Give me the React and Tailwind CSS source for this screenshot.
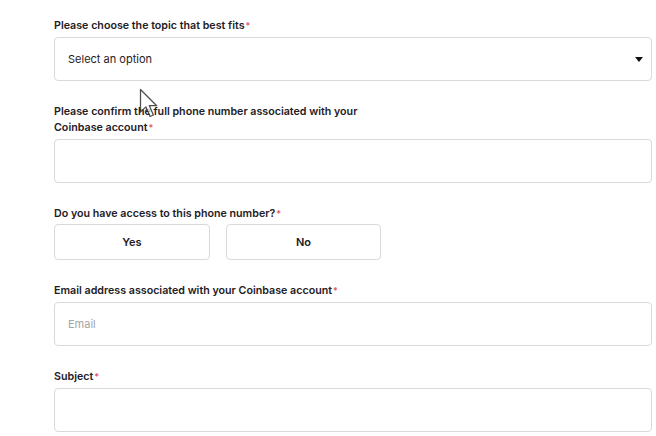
import React from "react";

const font = { fontFamily: "Inter, 'Liberation Sans', sans-serif" };

const Label = ({ children, className = "mb-[3px]" }) => (
  <div className={`text-[10.7px] leading-4 font-semibold text-[#1e2025] ${className}`}>
    {children}
    <span className="text-[#e3566a] text-[9px] align-top ml-[1px]">*</span>
  </div>
);

const Box = ({ children, className = "" }) => (
  <div
    className={`w-[598px] h-[44px] border border-[#d9d9de] rounded-[4px] bg-white flex items-center pl-[13px] pr-[8px] text-[11px] ${className}`}
  >
    {children}
  </div>
);

const Cursor = () => (
  <svg
    className="absolute left-[139px] top-[88px]"
    width="21"
    height="30"
    viewBox="0 0 14 20"
  >
    <path
      d="M1 1 L1 16 L4.6 12.6 L7.4 19 L9.6 18 L6.9 11.8 L11.8 11.8 Z"
      fill="rgba(255,255,255,0.7)"
      stroke="rgba(20,20,20,0.75)"
      strokeWidth="0.85"
      strokeLinejoin="round"
    />
  </svg>
);

export default function App() {
  return (
    <div className="relative w-[656px] h-[436px] bg-white overflow-hidden" style={font}>
      <div className="pl-[54px] pt-[18px] flex flex-col">
        <Label>Please choose the topic that best fits</Label>
        <Box className="justify-between text-[#1e2025]">
          <span>Select an option</span>
          <svg width="8" height="5" viewBox="0 0 8 5">
            <path d="M0 0 L8 0 L4 5 Z" fill="#111" />
          </svg>
        </Box>

        <div className="mt-[23px]">
          <Label>
            Please confirm the full phone number associated with your
            <br />
            Coinbase account
          </Label>
          <Box />
        </div>

        <div className="mt-[23px]">
          <Label className="mb-[2px]">Do you have access to this phone number?</Label>
          <div className="flex gap-[16px]">
            <button className="w-[156px] h-[36px] border border-[#d9d9de] rounded-[4px] bg-white text-[11px] font-semibold text-[#1e2025]">
              Yes
            </button>
            <button className="w-[155px] h-[36px] border border-[#d9d9de] rounded-[4px] bg-white text-[11px] font-semibold text-[#1e2025]">
              No
            </button>
          </div>
        </div>

        <div className="mt-[23px]">
          <Label>Email address associated with your Coinbase account</Label>
          <Box className="text-[#a3a5ab]">Email</Box>
        </div>

        <div className="mt-[23px]">
          <Label>Subject</Label>
          <Box />
        </div>
      </div>
      <Cursor />
    </div>
  );
}
